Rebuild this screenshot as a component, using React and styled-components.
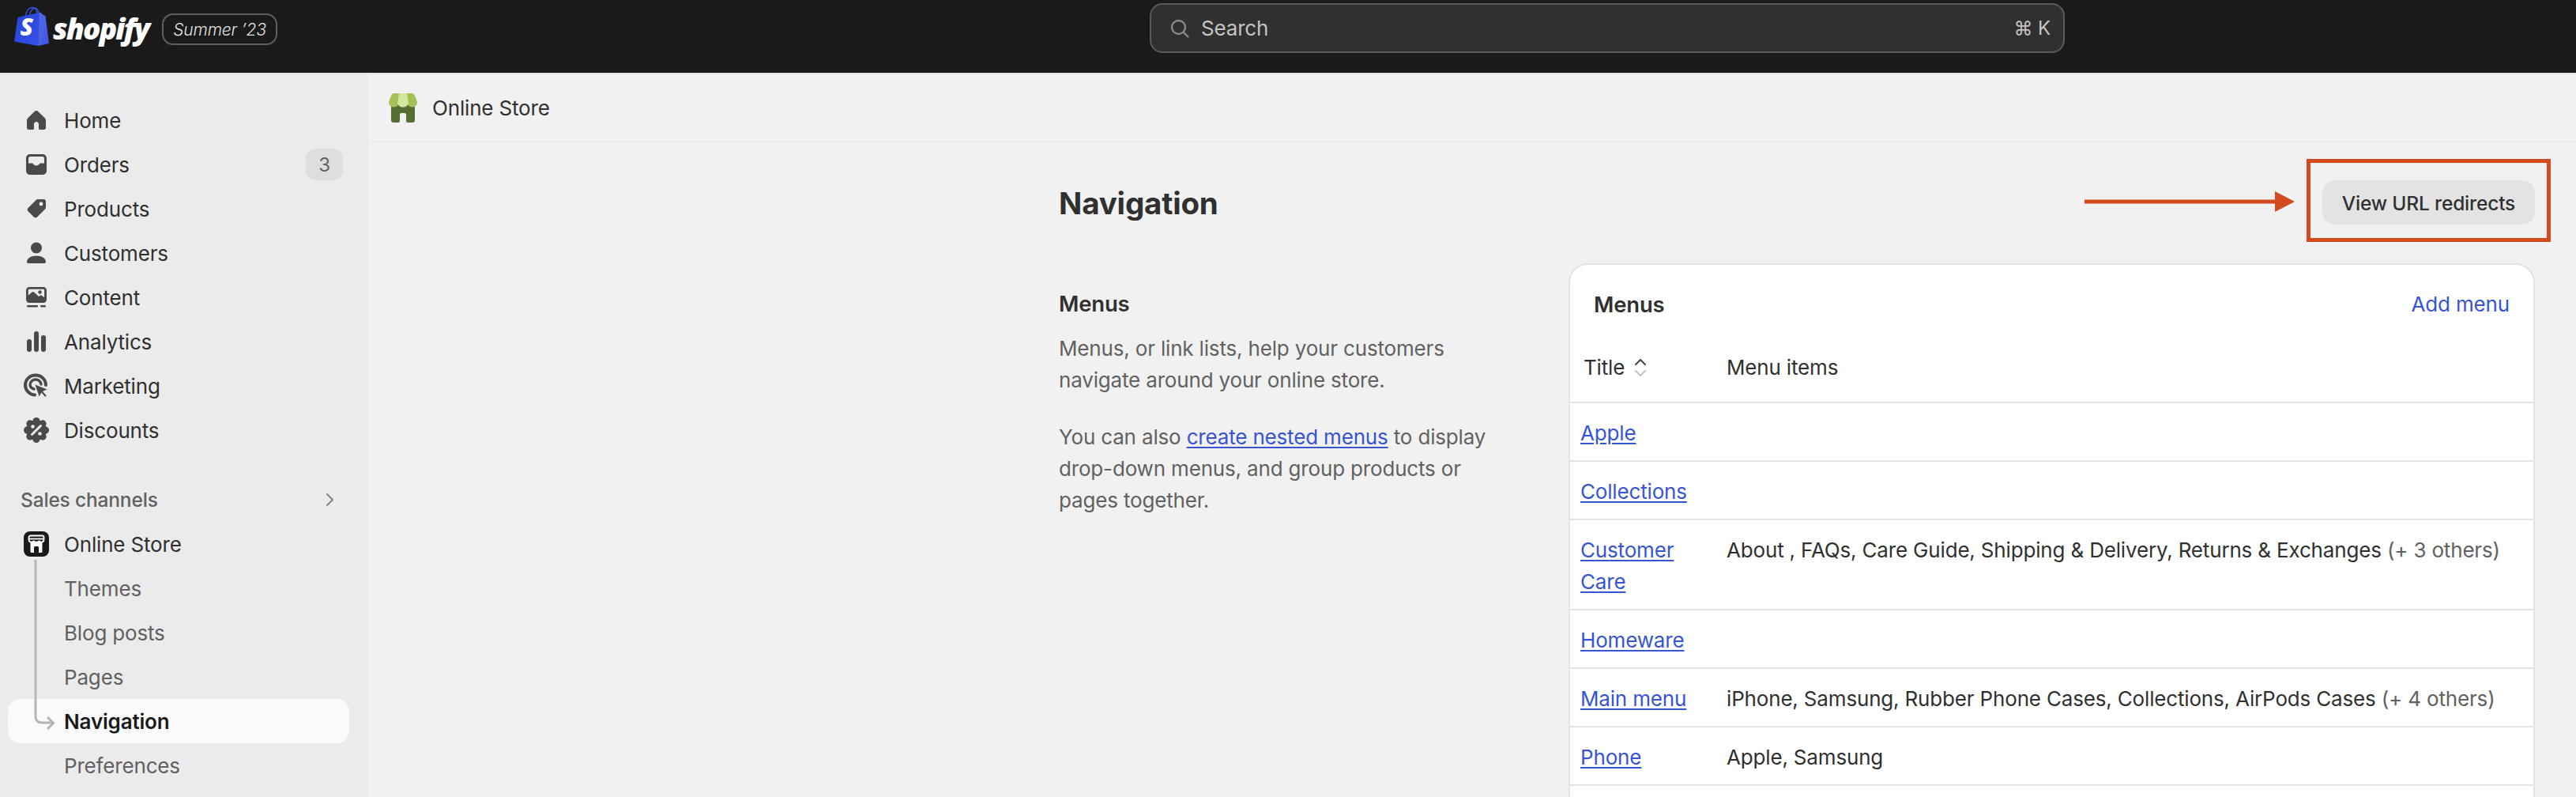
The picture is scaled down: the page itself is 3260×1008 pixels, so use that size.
import styled, { createGlobalStyle } from 'styled-components';

const GlobalStyle = createGlobalStyle`
  * {
    box-sizing: border-box;
  }
  html,
  body {
    margin: 0;
    padding: 0;
    background: #f1f1f1;
  }
  body {
    font-family: Inter, 'Noto Sans', sans-serif;
    letter-spacing: -0.17px;
    color: #303030;
  }
`;

const nav_items = [
  { label: 'Home', icon: 'home' },
  { label: 'Orders', icon: 'orders', badge: 3 },
  { label: 'Products', icon: 'products' },
  { label: 'Customers', icon: 'customers' },
  { label: 'Content', icon: 'content' },
  { label: 'Analytics', icon: 'analytics' },
  { label: 'Marketing', icon: 'marketing' },
  { label: 'Discounts', icon: 'discounts' },
];

const sub_items = ['Themes', 'Blog posts', 'Pages', 'Navigation', 'Preferences'];

const menus = [
  { title: 'Apple' },
  { title: 'Collections' },
  {
    title: 'Customer Care',
    items: 'About , FAQs, Care Guide, Shipping & Delivery, Returns & Exchanges',
    more: '(+ 3 others)',
  },
  { title: 'Homeware' },
  {
    title: 'Main menu',
    items: 'iPhone, Samsung, Rubber Phone Cases, Collections, AirPods Cases',
    more: '(+ 4 others)',
  },
  { title: 'Phone', items: 'Apple, Samsung' },
];

const NavIcon = ({ name }) => {
  switch (name) {
    case 'home':
      return (
        <svg width='26' height='26' viewBox='0 0 26 26' fill='#4a4a4a'>
          <path d='M13 1c-1 0-1.600.400-2.200 1L2.800 9.800C1.600 11 1 12.200 1 13.800v8.700C1 24 2 25 3.500 25h5c.8 0 1.500-.7 1.500-1.500V18c0-1.600 1.400-3 3-3s3 1.400 3 3v5.500c0 .8.700 1.500 1.500 1.500h5c1.500 0 2.500-1 2.500-2.500v-8.700c0-1.600-.6-2.800-1.800-4L15.200 2c-.6-.6-1.200-1-2.200-1z' />
        </svg>
      );
    case 'orders':
      return (
        <svg width='26' height='26' viewBox='0 0 26 26' fill='#4a4a4a'>
          <path
            fillRule='evenodd'
            d='M5 0h16c2.800 0 5 2.200 5 5v16c0 2.800-2.200 5-5 5H5c-2.800 0-5-2.200-5-5V5c0-2.800 2.200-5 5-5zm-2 11.500h5c1.300 0 1.500 3 5 3s3.700-3 5-3h5V5.500C23 4 22 3 20.500 3h-15C4 3 3 4 3 5.500v6z'
          />
        </svg>
      );
    case 'products':
      return (
        <svg width='26' height='26' viewBox='0 0 26 26' fill='#4a4a4a'>
          <path
            fillRule='evenodd'
            d='M15 1h7c2 0 3 1 3 3v7c0 1-.4 1.800-1 2.400l-10 10c-1.200 1.200-3 1.200-4.200 0l-7.200-7.200c-1.200-1.200-1.200-3 0-4.200l10-10c.6-.6 1.400-1 2.400-1zm4 3.600a2.400 2.400 0 1 0 0 4.800 2.400 2.400 0 0 0 0-4.800z'
          />
        </svg>
      );
    case 'customers':
      return (
        <svg width='26' height='28' viewBox='0 0 26 28' fill='#4a4a4a'>
          <circle cx='13' cy='7.500' r='7' />
          <path d='M13 17.500c7 0 12 3.500 12 7.500 0 1.500-1 2-2 2H3c-1 0-2-.5-2-2 0-4 5-7.500 12-7.500z' />
        </svg>
      );
    case 'content':
      return (
        <svg width='26' height='26' viewBox='0 0 26 26' fill='#4a4a4a'>
          <path
            fillRule='evenodd'
            d='M4 0h18c2.200 0 4 1.800 4 4v12c0 2.200-1.800 4-4 4H4c-2.200 0-4-1.800-4-4V4c0-2.200 1.800-4 4-4zm-1.200 10.500 4.700-4c.8-.7 1.800-.7 2.600 0l6 5.500 1.400-1c.8-.6 1.800-.6 2.600 0l3 2.300V4.200c0-.8-.6-1.400-1.400-1.400H4.200c-.8 0-1.400.6-1.400 1.400v6.300z'
          />
          <circle cx='17.500' cy='6.500' r='2.200' />
          <rect x='1' y='23' width='14' height='2.600' rx='1.300' />
          <rect x='18' y='23' width='7' height='2.600' rx='1.300' />
        </svg>
      );
    case 'analytics':
      return (
        <svg width='26' height='26' viewBox='0 0 26 26' fill='#4a4a4a'>
          <rect x='1' y='10' width='6' height='16' rx='3' />
          <rect x='10' y='0' width='6' height='26' rx='3' />
          <rect x='19' y='5' width='6' height='21' rx='3' />
        </svg>
      );
    case 'marketing':
      return (
        <svg width='32' height='32' viewBox='0 0 32 32' fill='none'>
          <path
            d='M14 27.500C7.400 27.200 2 21.700 2 15 2 8 7.800 2.500 15 2.500S28 8 28 15'
            stroke='#4a4a4a'
            strokeWidth='4'
            strokeLinecap='round'
          />
          <path
            d='M13 20c-2.800-.8-5-3.100-5-5.500 0-3.600 3.200-6.500 7-6.500s6.800 2.700 7 6'
            stroke='#4a4a4a'
            strokeWidth='3.400'
            strokeLinecap='round'
          />
          <path
            d='M13.500 13.500 31 20.500l-6 2.800 4.700 5.200-2.500 2.200-4.700-5.200-3 5.500z'
            fill='#4a4a4a'
            stroke='#ebebeb'
            strokeWidth='1.200'
          />
        </svg>
      );
    case 'discounts': {
      const bumps = Array.from({ length: 8 }, (_, i) => (i * Math.PI) / 4);
      return (
        <svg width='32' height='32' viewBox='0 0 32 32' fill='#4a4a4a'>
          <circle cx='16' cy='16' r='13' />
          {bumps.map((angle, index) => (
            <circle
              key={index}
              cx={16 + 11.500 * Math.sin(angle)}
              cy={16 - 11.500 * Math.cos(angle)}
              r='4.500'
            />
          ))}
          <path d='M10.500 21.500 21.500 10.500' stroke='#ebebeb' strokeWidth='3' strokeLinecap='round' />
          <circle cx='11.500' cy='11.500' r='2.300' fill='#ebebeb' />
          <circle cx='20.500' cy='20.500' r='2.300' fill='#ebebeb' />
        </svg>
      );
    }
    default:
      return null;
  }
};

const ShopifyBag = () => (
  <svg width='44' height='50' viewBox='0 0 44 50' fill='none'>
    <defs>
      <linearGradient id='bagLeft' x1='0' y1='0' x2='1' y2='1'>
        <stop offset='0' stopColor='#2744dc' />
        <stop offset='1' stopColor='#3450e6' />
      </linearGradient>
      <linearGradient id='bagRight' x1='0' y1='0' x2='1' y2='1'>
        <stop offset='0' stopColor='#5468e8' />
        <stop offset='1' stopColor='#3e55e4' />
      </linearGradient>
    </defs>
    <path
      d='M14 15c0-6 3-13.500 9-13.500 4 0 6 4.500 6.500 10M19 13c1-6 3-10 7-11 3 .5 5 4 5 9'
      stroke='#3451d8'
      strokeWidth='1.500'
    />
    <path d='M4.500 14 33 7.500 30 50 0 44.500z' fill='url(#bagLeft)' />
    <path d='M32 7.500c1.500 0 3.600 2.200 4 3l3.500 1.500L44 47 30 50z' fill='url(#bagRight)' />
    <text
      x='7.500'
      y='37'
      fill='#fff'
      fontFamily='Open Sans, sans-serif'
      fontSize='30'
      fontWeight='800'
      fontStyle='italic'
    >
      S
    </text>
  </svg>
);

const StoreBadge = () => (
  <svg width='32' height='32' viewBox='0 0 32 32'>
    <rect width='32' height='32' rx='8' fill='#1a1a1a' />
    <path
      d='M8.500 14v11.500c0 .8.700 1.500 1.500 1.500h3v-6.500c0-.8.700-1.500 1.500-1.500h3c.8 0 1.500.7 1.500 1.500V27h3c.8 0 1.500-.7 1.500-1.500V14z'
      fill='#fff'
    />
    <path
      d='M8.500 5.500h15c1.100 0 2 .9 2 2v3c0 1.800-1.400 3.200-3.200 3.200-1 0-2-.5-2.800-1.200-.8.700-2 1.200-3.500 1.200s-2.700-.5-3.500-1.200c-.8.700-1.800 1.200-2.800 1.200-1.800 0-3.200-1.400-3.200-3.200v-3c0-1.100.9-2 2-2z'
      fill='#1a1a1a'
      stroke='#fff'
      strokeWidth='1.800'
    />
    <path d='M7 9.500h18' stroke='#fff' strokeWidth='1.800' />
  </svg>
);

const GreenStore = () => (
  <svg width='36' height='37' viewBox='0 0 36 37'>
    <path
      d='M3 14h30v20c0 1.700-1.300 3-3 3h-6c-1.100 0-2-.9-2-2v-8c0-1.100-.9-2-2-2h-4c-1.100 0-2 .9-2 2v8c0 1.100-.9 2-2 2H6c-1.700 0-3-1.300-3-3z'
      fill='#576e33'
    />
    <path
      d='M7 0h22c2 0 3 1 4 3l3 8c0 3-2 6.500-6 6.500-2.500 0-4.500-1.300-6-3-1.500 1.700-3.500 3-6 3s-4.500-1.300-6-3c-1.500 1.700-3.500 3-6 3-4 0-6-3.500-6-6.500l3-8c1-2 2-3 4-3z'
      fill='#a4c057'
    />
    <path d='M13 0h10l2 13c-1.300 2.700-3.500 4.500-7 4.500s-5.700-1.800-7-4.500z' fill='#d4e79e' />
  </svg>
);

const Root = styled.div`
  height: 100vh;
  overflow: hidden;
  display: flex;
  flex-direction: column;
`;

const TopBar = styled.header`
  flex: none;
  height: 94px;
  padding-top: 4px;
  background: #1a1a1a;
  border-bottom: 2px solid #e3e3e3;
  display: flex;
  align-items: flex-start;
`;

const Brand = styled.div`
  width: 1455px;
  height: 63px;
  padding: 4px 0 0 18px;
  display: flex;
  align-items: flex-start;
`;

const Wordmark = styled.span`
  margin: 5px 0 0 5px;
  font-family: 'Open Sans', sans-serif;
  font-size: 37px;
  line-height: 46px;
  font-weight: 800;
  font-style: italic;
  letter-spacing: -1.800px;
  color: #fff;
`;

const EditionTag = styled.span`
  margin: 9px 0 0 17px;
  height: 40px;
  padding: 0 12px;
  display: flex;
  align-items: center;
  border: 2px solid #5f5f5f;
  border-radius: 14px;
  font-size: 21px;
  font-style: italic;
  font-weight: 300;
  color: #e3e3e3;
`;

const SearchBox = styled.div`
  width: 1158px;
  height: 63px;
  padding: 0 16px 0 24px;
  display: flex;
  align-items: center;
  gap: 15px;
  background: #303030;
  border: 2px solid #5a5a5a;
  border-radius: 16px;
  font-size: 26px;
  color: #c4c4c4;
`;

const SearchHint = styled.span`
  margin-left: auto;
  font-size: 24px;
`;

const Body = styled.div`
  flex: 1;
  min-height: 0;
  display: flex;
`;

const Sidebar = styled.nav`
  flex: none;
  width: 466px;
  padding-top: 30px;
  background: #ebebeb;
`;

const NavRow = styled.div`
  width: 432px;
  height: 56px;
  margin-left: 10px;
  padding-left: 18px;
  display: flex;
  align-items: center;
  gap: 17px;
  border-radius: 16px;
  font-size: 26px;
  font-weight: ${(p) => (p.$active ? 600 : 400)};
  color: ${(p) => (p.$sub ? '#616161' : '#303030')};
  background: ${(p) => (p.$active ? '#fafafa' : 'transparent')};
  ${(p) => p.$active && 'color: #1a1a1a;'}
`;

const IconSlot = styled.span`
  flex: none;
  width: 36px;
  display: flex;
  justify-content: center;
`;

const CountBadge = styled.span`
  margin-left: auto;
  margin-right: 8px;
  width: 47px;
  height: 40px;
  display: flex;
  align-items: center;
  justify-content: center;
  border-radius: 13px;
  background: #dedede;
  font-size: 24px;
  color: #616161;
`;

const SectionHeader = styled.div`
  height: 56px;
  margin-top: 32px;
  padding: 0 42px 0 26px;
  display: flex;
  align-items: center;
  justify-content: space-between;
  font-size: 24.500px;
  font-weight: 500;
  color: #616161;
`;

const SubNav = styled.div`
  position: relative;
`;

const TreeLine = styled.svg`
  position: absolute;
  left: 43px;
  top: -8px;
  z-index: 1;
`;

const Main = styled.main`
  flex: 1;
  min-width: 0;
  display: flex;
  flex-direction: column;
`;

const Breadcrumb = styled.div`
  flex: none;
  height: 86px;
  padding-left: 26px;
  display: flex;
  align-items: center;
  gap: 19px;
  border-bottom: 2px solid #ebebeb;
  font-size: 26px;
  font-weight: 400;
`;

const Page = styled.div`
  flex: 1;
  min-height: 0;
  padding: 48px 52px 0 874px;
  display: flex;
  flex-direction: column;
`;

const PageHeader = styled.div`
  flex: none;
  position: relative;
  height: 56px;
  display: flex;
  align-items: center;
  justify-content: space-between;
`;

const PageTitle = styled.h1`
  margin: 0;
  font-size: 38.500px;
  font-weight: 650;
  line-height: 56px;
  margin-top: 1px;
`;

const GhostButton = styled.button`
  width: 269px;
  height: 56px;
  padding: 2px 0 0;
  border: none;
  border-radius: 16px;
  background: #e3e3e3;
  font-family: inherit;
  font-size: 24.500px;
  font-weight: 500;
  letter-spacing: inherit;
  color: #303030;
`;

const CalloutBox = styled.div`
  position: absolute;
  right: -20px;
  top: -27px;
  width: 309px;
  height: 105px;
  border: 5px solid #d34a1e;
`;

const CalloutArrow = styled.svg`
  position: absolute;
  left: 1298px;
  top: 14px;
`;

const Layout = styled.div`
  flex: 1;
  min-height: 0;
  margin-top: 49px;
  display: flex;
`;

const Intro = styled.section`
  flex: none;
  width: 645px;
  padding: 33px 85px 0 0;
`;

const SectionTitle = styled.h2`
  margin: 0;
  font-size: 27.500px;
  font-weight: 600;
  line-height: 36px;
`;

const IntroText = styled.p`
  margin: ${(p) => (p.$first ? '19px' : '32px')} 0 0;
  font-size: 26px;
  line-height: 40px;
  font-weight: 400;
  color: #616161;
`;

const TextLink = styled.a`
  color: #3654d3;
  text-decoration: underline;
  text-underline-offset: 3px;
`;

const Card = styled.section`
  flex: 1;
  min-width: 0;
  background: #fff;
  border: 2px solid #e3e3e3;
  border-bottom: none;
  border-radius: 24px 24px 0 0;
  overflow: hidden;
`;

const CardHeader = styled.div`
  padding: 32px 30px 0;
  display: flex;
  justify-content: space-between;
  align-items: center;
`;

const AddLink = styled.a`
  font-size: 26px;
  line-height: 36px;
  color: #3654d3;
`;

const MenuTable = styled.table`
  width: 100%;
  border-collapse: collapse;
  table-layout: fixed;
  font-size: 26px;
  line-height: 40px;
`;

const HeadCell = styled.th`
  width: ${(p) => p.$width || 'auto'};
  padding: 42px 30px 23px ${(p) => (p.$first ? '17px' : '0')};
  text-align: left;
  font-weight: 400;
  vertical-align: middle;
`;

const TitleSort = styled.span`
  display: inline-flex;
  align-items: center;
  gap: 12px;
`;

const MenuRow = styled.tr`
  border-top: 2px solid #e3e3e3;
  border-bottom: 2px solid #e3e3e3;
`;

const TitleCell = styled.td`
  padding: 18px 30px 14px 13px;
  vertical-align: top;
`;

const ItemsCell = styled.td`
  padding: 18px 0 14px;
  vertical-align: top;
`;

const Others = styled.span`
  color: #616161;
`;

const App = () => {
  return (
    <Root>
      <GlobalStyle />
      <TopBar>
        <Brand>
          <ShopifyBag />
          <Wordmark>shopify</Wordmark>
          <EditionTag>Summer ’23</EditionTag>
        </Brand>
        <SearchBox>
          <svg width='24' height='24' viewBox='0 0 24 24' fill='none' stroke='#8a8a8a' strokeWidth='2.400'>
            <circle cx='10.500' cy='10.500' r='8.500' />
            <path d='m17 17 5.500 5.500' strokeLinecap='round' />
          </svg>
          <span>Search</span>
          <SearchHint>⌘ K</SearchHint>
        </SearchBox>
      </TopBar>
      <Body>
        <Sidebar>
          {nav_items.map((item) => (
            <NavRow key={item.label}>
              <IconSlot>
                <NavIcon name={item.icon} />
              </IconSlot>
              {item.label}
              {item.badge && <CountBadge>{item.badge}</CountBadge>}
            </NavRow>
          ))}
          <SectionHeader>
            Sales channels
            <svg width='12' height='18' viewBox='0 0 12 18' fill='none' stroke='#8a8a8a' strokeWidth='2.200'>
              <path d='m2 2 7 7-7 7' strokeLinecap='round' strokeLinejoin='round' />
            </svg>
          </SectionHeader>
          <NavRow>
            <IconSlot>
              <StoreBadge />
            </IconSlot>
            Online Store
          </NavRow>
          <SubNav>
            <TreeLine width='30' height='216' viewBox='0 0 30 216' fill='none' stroke='#b5b5b5' strokeWidth='3'>
              <path d='M2 0v198c0 5 3 8 8 8h14' />
              <path d='m17 199 7.500 7.500-7.500 7.500' />
            </TreeLine>
            {sub_items.map((label) => (
              <NavRow key={label} $sub $active={label === 'Navigation'}>
                <IconSlot />
                {label}
              </NavRow>
            ))}
          </SubNav>
        </Sidebar>
        <Main>
          <Breadcrumb>
            <GreenStore />
            Online Store
          </Breadcrumb>
          <Page>
            <PageHeader>
              <PageTitle>Navigation</PageTitle>
              <CalloutArrow width='266' height='26' viewBox='0 0 266 26'>
                <path d='M0 10.500h241v5H0z' fill='#d34a1e' />
                <path d='M241 0l25 13-25 13z' fill='#d34a1e' />
              </CalloutArrow>
              <GhostButton>View URL redirects</GhostButton>
              <CalloutBox />
            </PageHeader>
            <Layout>
              <Intro>
                <SectionTitle>Menus</SectionTitle>
                <IntroText $first>
                  Menus, or link lists, help your customers navigate around your online store.
                </IntroText>
                <IntroText>
                  You can also <TextLink>create nested menus</TextLink> to display drop-down menus,
                  and group products or pages together.
                </IntroText>
              </Intro>
              <Card>
                <CardHeader>
                  <SectionTitle>Menus</SectionTitle>
                  <AddLink>Add menu</AddLink>
                </CardHeader>
                <MenuTable>
                  <thead>
                    <tr>
                      <HeadCell $first $width='198px'>
                        <TitleSort>
                          Title
                          <svg width='16' height='26' viewBox='0 0 16 26' fill='none' strokeWidth='2.200'>
                            <path d='m2 9 6-6 6 6' stroke='#4a4a4a' strokeLinecap='round' strokeLinejoin='round' />
                            <path d='m2 17 6 6 6-6' stroke='#c4c4c4' strokeLinecap='round' strokeLinejoin='round' />
                          </svg>
                        </TitleSort>
                      </HeadCell>
                      <HeadCell>Menu items</HeadCell>
                    </tr>
                  </thead>
                  <tbody>
                    {menus.map((menu) => (
                      <MenuRow key={menu.title}>
                        <TitleCell>
                          <TextLink>{menu.title}</TextLink>
                        </TitleCell>
                        <ItemsCell>
                          {menu.items}
                          {menu.more && <Others> {menu.more}</Others>}
                        </ItemsCell>
                      </MenuRow>
                    ))}
                  </tbody>
                </MenuTable>
              </Card>
            </Layout>
          </Page>
        </Main>
      </Body>
    </Root>
  );
};

export default App;
